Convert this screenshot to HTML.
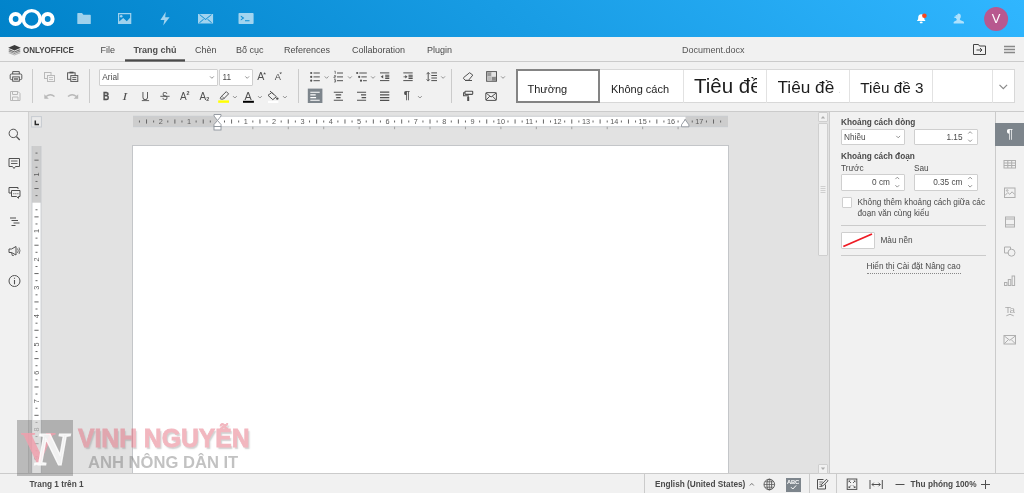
<!DOCTYPE html>
<html lang="vi">
<head>
<meta charset="utf-8">
<title>Document.docx - ONLYOFFICE</title>
<style>
*{box-sizing:border-box;margin:0;padding:0}
html,body{width:1024px;height:493px;overflow:hidden;background:#e2e2e2;font-family:"Liberation Sans",sans-serif;font-size:8.25px;color:#4a4a4a}
div,svg{position:absolute}
.bg{left:0;top:0}
#hdr{left:0;top:0;width:1024px;height:37px;background:linear-gradient(40deg,#0082c9 0%,#30b6ff 100%)}
#tabs{left:0;top:37px;width:1024px;height:24px;background:#f1f1f1}
#tbar{left:0;top:61px;width:1024px;height:51px;background:#f1f1f1;border-top:1px solid #cbcbcb;border-bottom:1px solid #cbcbcb}
#left{left:0;top:112px;width:29px;height:362px;background:#f1f1f1;border-right:1px solid #d0d0d0}
#rpanel{left:829px;top:112px;width:166px;height:362px;background:#f1f1f1;border-left:1px solid #cbcbcb}
#ricons{left:995px;top:112px;width:29px;height:362px;background:#f1f1f1;border-left:1px solid #cbcbcb}
#status{left:0;top:473px;width:1024px;height:20px;background:#f1f1f1;border-top:1px solid #cbcbcb}
.L{left:0;top:0;width:1024px;height:493px;will-change:transform}
.t{white-space:nowrap;line-height:14px}
.b{font-weight:bold}
.tb{font-size:9px}
.g{color:#1c1c1c;line-height:14px}
svg{overflow:visible}
svg text{font-family:"Liberation Sans",sans-serif}
</style>
</head>
<body>
<div id="hdr"></div><div id="tabs"></div><div id="tbar"></div><div id="left"></div><div id="rpanel"></div><div id="ricons"></div><div id="status"></div>
<div class="L"><div style="left:132px;top:145px;width:597px;height:328px;background:#fff;border:1px solid #c4c6c9;border-bottom:0"></div>
<div style="left:818px;top:112px;width:10px;height:10px;background:#f1f1f1;border:1px solid #cfcfcf;border-radius:1px"></div>
<div style="left:818px;top:123px;width:10px;height:133px;background:#f1f1f1;border:1px solid #cfcfcf;border-radius:1px"></div>
<div style="left:818px;top:464px;width:10px;height:10px;background:#f1f1f1;border:1px solid #cfcfcf;border-radius:1px"></div>
<svg class="bg" width="1024" height="493" viewBox="0 0 1024 493">
<path d="M820.800 118.500 l2.200-2.500 2.200 2.500z M820.800 467.500 l2.200 2.500 2.200-2.500z" fill="#adadad"/>
<path d="M820.500 186.500 h5 M820.500 188.500 h5 M820.500 190.500 h5 M820.500 192.500 h5" stroke="#cfcfcf" stroke-width="1"/>
<rect x="31.600" y="116.600" width="9.800" height="10.400" fill="#eaeaea" stroke="#c6cad0" stroke-width="1"/>
<path d="M35.300 120.600 v4 h3.700" fill="none" stroke="#2a2a2a" stroke-width="1.500"/>
<rect x="133" y="116.3" width="595" height="10.4" fill="#fff"/>
<rect x="133" y="116.3" width="84" height="10.4" fill="#cdcdcd"/>
<rect x="685.500" y="116.3" width="42.500" height="10.4" fill="#cdcdcd"/>
<path d="M133 116.3 h595 M133 126.7 h595" stroke="#c3c6cb" stroke-width=".8"/>
<path d="M146.53 119.400 v4.200 M174.88 119.400 v4.200 M203.22 119.400 v4.200 M231.58 119.400 v4.200 M259.93 119.400 v4.200 M288.27 119.400 v4.200 M316.62 119.400 v4.200 M344.98 119.400 v4.200 M373.33 119.400 v4.200 M401.68 119.400 v4.200 M430.02 119.400 v4.200 M458.38 119.400 v4.200 M486.73 119.400 v4.200 M515.08 119.400 v4.200 M543.43 119.400 v4.200 M571.77 119.400 v4.200 M600.12 119.400 v4.200 M628.48 119.400 v4.200 M656.83 119.400 v4.200 M685.18 119.400 v4.200 M713.52 119.400 v4.200" stroke="#666" stroke-width="1"/>
<path d="M139.44 120.500 v2 M153.61 120.500 v2 M167.79 120.500 v2 M181.96 120.500 v2 M196.14 120.500 v2 M210.31 120.500 v2 M224.49 120.500 v2 M238.66 120.500 v2 M252.84 120.500 v2 M267.01 120.500 v2 M281.19 120.500 v2 M295.36 120.500 v2 M309.54 120.500 v2 M323.71 120.500 v2 M337.89 120.500 v2 M352.06 120.500 v2 M366.24 120.500 v2 M380.41 120.500 v2 M394.59 120.500 v2 M408.76 120.500 v2 M422.94 120.500 v2 M437.11 120.500 v2 M451.29 120.500 v2 M465.46 120.500 v2 M479.64 120.500 v2 M493.81 120.500 v2 M507.99 120.500 v2 M522.16 120.500 v2 M536.34 120.500 v2 M550.51 120.500 v2 M564.69 120.500 v2 M578.86 120.500 v2 M593.04 120.500 v2 M607.21 120.500 v2 M621.39 120.500 v2 M635.56 120.500 v2 M649.74 120.500 v2 M663.91 120.500 v2 M678.09 120.500 v2 M692.26 120.500 v2 M706.44 120.500 v2 M720.61 120.500 v2" stroke="#666" stroke-width="1"/>
<text x="160.70" y="124.300" text-anchor="middle" font-size="7.300" fill="#5c5c5c">2</text>
<text x="189.05" y="124.300" text-anchor="middle" font-size="7.300" fill="#5c5c5c">1</text>
<text x="245.75" y="124.300" text-anchor="middle" font-size="7.300" fill="#5c5c5c">1</text>
<text x="274.10" y="124.300" text-anchor="middle" font-size="7.300" fill="#5c5c5c">2</text>
<text x="302.45" y="124.300" text-anchor="middle" font-size="7.300" fill="#5c5c5c">3</text>
<text x="330.80" y="124.300" text-anchor="middle" font-size="7.300" fill="#5c5c5c">4</text>
<text x="359.15" y="124.300" text-anchor="middle" font-size="7.300" fill="#5c5c5c">5</text>
<text x="387.50" y="124.300" text-anchor="middle" font-size="7.300" fill="#5c5c5c">6</text>
<text x="415.85" y="124.300" text-anchor="middle" font-size="7.300" fill="#5c5c5c">7</text>
<text x="444.20" y="124.300" text-anchor="middle" font-size="7.300" fill="#5c5c5c">8</text>
<text x="472.55" y="124.300" text-anchor="middle" font-size="7.300" fill="#5c5c5c">9</text>
<text x="500.90" y="124.300" text-anchor="middle" font-size="7.300" fill="#5c5c5c">10</text>
<text x="529.25" y="124.300" text-anchor="middle" font-size="7.300" fill="#5c5c5c">11</text>
<text x="557.60" y="124.300" text-anchor="middle" font-size="7.300" fill="#5c5c5c">12</text>
<text x="585.95" y="124.300" text-anchor="middle" font-size="7.300" fill="#5c5c5c">13</text>
<text x="614.30" y="124.300" text-anchor="middle" font-size="7.300" fill="#5c5c5c">14</text>
<text x="642.65" y="124.300" text-anchor="middle" font-size="7.300" fill="#5c5c5c">15</text>
<text x="671.00" y="124.300" text-anchor="middle" font-size="7.300" fill="#5c5c5c">16</text>
<text x="699.35" y="124.300" text-anchor="middle" font-size="7.300" fill="#5c5c5c">17</text>
<path d="M252.84 126.700 v2.500 M288.27 126.700 v2.500 M323.71 126.700 v2.500 M359.15 126.700 v2.500 M394.59 126.700 v2.500 M430.02 126.700 v2.500 M465.46 126.700 v2.500 M500.90 126.700 v2.500 M536.34 126.700 v2.500 M571.77 126.700 v2.500 M607.21 126.700 v2.500 M642.65 126.700 v2.500 M678.09 126.700 v2.500" stroke="#999" stroke-width=".9"/>
<g fill="#fff" stroke="#8d939b" stroke-width=".9"><path d="M214 114.500 h7 v1.500 l-3.500 4.500 -3.500-4.500z"/><path d="M214 126.500 v-2 l3.500-4 3.500 4 v2z"/><rect x="214" y="126.500" width="7" height="3.500"/><path d="M681.500 126.800 v-2 l3.700-5.300 3.700 5.300 v2z"/></g>
<rect x="32" y="146" width="9" height="327" fill="#fff"/>
<rect x="32" y="146" width="9" height="56.700" fill="#cdcdcd"/>
<path d="M32 146 v327 M41 146 v327" stroke="#c3c6cb" stroke-width=".8"/>
<path d="M34.400 160.17 h4.200 M34.400 188.52 h4.200 M34.400 216.88 h4.200 M34.400 245.22 h4.200 M34.400 273.57 h4.200 M34.400 301.93 h4.200 M34.400 330.27 h4.200 M34.400 358.62 h4.200 M34.400 386.98 h4.200 M34.400 415.32 h4.200 M34.400 443.68 h4.200" stroke="#666" stroke-width="1"/>
<path d="M35.500 153.09 h2 M35.500 167.26 h2 M35.500 181.44 h2 M35.500 195.61 h2 M35.500 209.79 h2 M35.500 223.96 h2 M35.500 238.14 h2 M35.500 252.31 h2 M35.500 266.49 h2 M35.500 280.66 h2 M35.500 294.84 h2 M35.500 309.01 h2 M35.500 323.19 h2 M35.500 337.36 h2 M35.500 351.54 h2 M35.500 365.71 h2 M35.500 379.89 h2 M35.500 394.06 h2 M35.500 408.24 h2 M35.500 422.41 h2 M35.500 436.59 h2 M35.500 450.76 h2 M35.500 464.94 h2" stroke="#666" stroke-width="1"/>
<text transform="translate(39.300 174.35) rotate(-90)" text-anchor="middle" font-size="7.300" fill="#5c5c5c">1</text>
<text transform="translate(39.300 231.05) rotate(-90)" text-anchor="middle" font-size="7.300" fill="#5c5c5c">1</text>
<text transform="translate(39.300 259.40) rotate(-90)" text-anchor="middle" font-size="7.300" fill="#5c5c5c">2</text>
<text transform="translate(39.300 287.75) rotate(-90)" text-anchor="middle" font-size="7.300" fill="#5c5c5c">3</text>
<text transform="translate(39.300 316.10) rotate(-90)" text-anchor="middle" font-size="7.300" fill="#5c5c5c">4</text>
<text transform="translate(39.300 344.45) rotate(-90)" text-anchor="middle" font-size="7.300" fill="#5c5c5c">5</text>
<text transform="translate(39.300 372.80) rotate(-90)" text-anchor="middle" font-size="7.300" fill="#5c5c5c">6</text>
<text transform="translate(39.300 401.15) rotate(-90)" text-anchor="middle" font-size="7.300" fill="#5c5c5c">7</text>
<text transform="translate(39.300 429.50) rotate(-90)" text-anchor="middle" font-size="7.300" fill="#5c5c5c">8</text>
<text transform="translate(39.300 457.85) rotate(-90)" text-anchor="middle" font-size="7.300" fill="#5c5c5c">9</text>
</svg>
</div>
<div class="L"><svg style="left:0;top:0" width="1024" height="37" viewBox="0 0 1024 37">
<g fill="none" stroke="#fff">
<circle cx="15.6" cy="19" r="4.9" stroke-width="4"/>
<circle cx="47.7" cy="19" r="4.9" stroke-width="4"/>
<circle cx="31.7" cy="19" r="8.4" stroke-width="3.4"/>
</g>
<g fill="#fff" opacity=".62">
<path d="M77.300 13.600 q0-.7 .7-.7 h4 l1.400 1.800 h6.700 q.7 0 .7 .7 v8 q0 .7-.7 .7 h-12.100 q-.7 0-.7-.7z"/>
<path fill-rule="evenodd" d="M118 13 h13.300 v11 h-13.300z M119.200 14.200 v7.300 l4-3.500 3.600 3.200 3.300-3.400 v-3.600z"/>
<circle cx="121.200" cy="16.300" r="1.300"/>
<path d="M165.800 11.800 l-5.400 8.200 h4 l-1.200 5.600 6.400-8.400 h-4.400z"/>
<path fill-rule="evenodd" d="M198 14 h15.100 v9.400 h-15.100z M199.300 14.800 l6.250 5.200 6.250-5.200 -.6-.5 -5.650 4.700 -5.650-4.700z M199.200 22.600 l.6 .5 4-3.600 -.6-.5z M211.900 22.600 l-.6 .5 -4-3.600 .6-.5z"/>
<path fill-rule="evenodd" d="M238.500 13.800 q0-.8 .8-.8 h13.500 q.8 0 .8 .8 v9.400 q0 .8-.8 .8 h-13.500 q-.8 0-.8-.8z M240.800 15.600 l3.600 2.500 -3.600 2.500 v-1.300 l1.900-1.200 -1.900-1.200z M245 20.200 h4.500 v1.100 h-4.500z"/>
<path d="M958.2 13.6 a2.6 2.6 0 0 1 2.6 2.7 c0 1.3-.5 2.3-1 2.8 0 .7 .3 1 1.400 1.500 1.400 .5 2.800 1 2.800 2 v1 h-10.400 v-1 c0-1 1.200-1.500 2.300-1.900 .6-.300 .9-.600 .9-1.300 -.4-.3-.7-.8-.9-1.400 h-1.500 v-1.600 h1.300 v-1.300 h1.200 v1.300 h.2 a2.600 2.600 0 0 1 1.100-2.800z"/>
</g>
<path fill="#fff" d="M921.200 14.200 c2.100 0 3 1.500 3 3.200 0 1.600 .3 2.500 1.100 3.100 v.5 h-8.200 v-.5 c.8-.6 1.100-1.500 1.100-3.100 0-1.700 .9-3.200 3-3.200z"/><ellipse cx="921.200" cy="22.400" rx="1.500" ry=".9" fill="#fff"/>
<circle cx="924.4" cy="15.700" r="2.300" fill="#f9461c"/>
<circle cx="996.1" cy="18.900" r="12" fill="#b8588f"/>
<text x="996.1" y="23.300" text-anchor="middle" font-family="Liberation Sans, sans-serif" font-size="13" fill="#fff">V</text>
</svg>
</div>
<div class="L" style="top:37px"><svg style="left:7.800px;top:7.600px" width="13" height="10.500" viewBox="0 0 13 10.500">
<path d="M6.500 0 L12.800 2.800 6.500 5.600 .2 2.800z" fill="#3c3c3c"/>
<path d="M1.700 4.300 L.2 4.950 6.500 7.500 12.800 4.950 11.300 4.300 6.500 6.400z" fill="#6a6a6a"/>
<path d="M1.700 5.800 L.2 6.450 6.500 9 12.800 6.450 11.300 5.800 6.500 7.900z" fill="#8e8e8e"/>
<path d="M1.700 7.300 L.2 7.950 6.500 10.500 12.800 7.950 11.300 7.300 6.500 9.400z" fill="#b6b6b6"/>
</svg>
<div class="t b" style="left:23px;top:5.800px;font-size:9.600px;color:#444;transform-origin:0 50%;transform:scaleX(.835)">ONLYOFFICE</div>
<div class="t tb" style="top:5.500px;left:100.500px">File</div>
<div class="t" style="left:133.500px;top:5.500px;font-size:9px;font-weight:bold;color:#505050">Trang chủ</div>
<svg style="left:125px;top:22px" width="60" height="3" viewBox="0 0 60 3"><rect x="0" y=".3" width="60" height="2.300" fill="#4a4a4a"/></svg>
<div class="t tb" style="top:5.500px;left:195px">Chèn</div>
<div class="t tb" style="top:5.500px;left:236px">Bố cục</div>
<div class="t tb" style="top:5.500px;left:284px">References</div>
<div class="t tb" style="top:5.500px;left:352px">Collaboration</div>
<div class="t tb" style="top:5.500px;left:427px">Plugin</div>
<div class="t" style="left:682px;top:5.500px;font-size:9px;color:#555">Document.docx</div>
<svg style="left:973px;top:7px" width="13" height="11" viewBox="0 0 13 11" fill="none" stroke="#444" stroke-width="1">
<path d="M.5 .5 h5 l1 1.500 h6 v8.500 h-12z"/>
<path d="M3.500 6 h5.500 M7 4 l2 2-2 2"/>
</svg>
<svg style="left:1004px;top:9px" width="11" height="8" viewBox="0 0 11 8" stroke="#888" stroke-width="1.300">
<path d="M0 .5 h11 M0 3.500 h11 M0 6.500 h11"/>
</svg>
</div>
<div class="L"><div style="left:32px;top:69px;width:1px;height:34px;background:#cbcbcb"></div>
<div style="left:89px;top:69px;width:1px;height:34px;background:#cbcbcb"></div>
<div style="left:298px;top:69px;width:1px;height:34px;background:#cbcbcb"></div>
<div style="left:451px;top:69px;width:1px;height:34px;background:#cbcbcb"></div>
<div style="left:99px;top:69px;width:118.500px;height:16.500px;background:#fff;border:1px solid #cfcfcf;border-radius:1px"></div>
<div style="left:219px;top:69px;width:33.500px;height:16.500px;background:#fff;border:1px solid #cfcfcf;border-radius:1px"></div>
<div class="t" style="left:102.300px;top:71.200px">Arial</div>
<div class="t" style="left:222.500px;top:71.200px">11</div>
<svg class="bg" width="1024" height="493" viewBox="0 0 1024 493">
<!-- print -->
<g fill="none" stroke="#505050" stroke-width=".95">
<path d="M12.700 74 v-2.400 h6.600 v2.400"/>
<rect x="10.200" y="74" width="11.600" height="5.600" rx="1.200"/>
<rect x="12.700" y="76.900" width="6.600" height="4.300" fill="#f1f1f1"/>
<path d="M14 79 h4" stroke-width="1.300"/>
</g>
<!-- save (disabled) -->
<g fill="none" stroke="#505050" stroke-width="1" opacity=".35">
<path d="M10.500 91.500 h7.500 l2 2 v7 h-9.500z"/>
<path d="M12.500 91.500 v3 h5 v-3 M12.500 100.500 v-3.500 h5.500 v3.500"/>
</g>
<!-- copy (disabled) -->
<g fill="#f1f1f1" stroke="#505050" stroke-width="1" opacity=".35">
<rect x="44.500" y="72.500" width="6.500" height="6"/>
<rect x="47.500" y="75.500" width="7" height="6"/>
<path d="M49 77.500 h4 M49 79.500 h4" stroke-width=".8"/>
</g>
<!-- paste -->
<g fill="#f1f1f1" stroke="#505050" stroke-width=".95">
<rect x="67.600" y="72.800" width="7.500" height="6.500"/>
<path d="M69.500 72.500 h4" stroke-width="1.600"/>
<rect x="70.800" y="75.600" width="7" height="5.800"/>
<path d="M72.300 77.600 h4 M72.300 79.500 h4" stroke-width=".9"/>
</g>
<!-- undo / redo disabled -->
<g opacity=".35" fill="none" stroke="#505050" stroke-width="1.400">
<path d="M46 96.500 q4.500-3.500 8.500 0"/>
<path d="M44.300 94.300 v4.500 h4.500z" fill="#505050" stroke="none"/>
<path d="M76.500 96.500 q-4.500-3.500-8.500 0"/>
<path d="M78.200 94.300 v4.500 h-4.500z" fill="#505050" stroke="none"/>
</g>
<!-- combo arrows -->
<g fill="none" stroke="#888" stroke-width=".9">
<path d="M210 76.400 l1.900 1.900 1.900-1.900"/>
<path d="M245.300 76.400 l1.900 1.900 1.900-1.900"/>
<path d="M233 96.100 l1.900 1.900 1.900-1.900"/>
<path d="M258 96.100 l1.900 1.900 1.900-1.900"/>
<path d="M283 96.100 l1.900 1.900 1.900-1.900"/>
<path d="M324.700 76.400 l1.900 1.900 1.900-1.900"/>
<path d="M348 76.400 l1.900 1.900 1.900-1.900"/>
<path d="M371.100 76.400 l1.900 1.900 1.900-1.900"/>
<path d="M441.200 76.400 l1.900 1.900 1.900-1.900"/>
<path d="M501.100 76.400 l1.900 1.900 1.900-1.900"/>
<path d="M418 96.100 l1.900 1.900 1.900-1.900"/>
</g>
<!-- B I U S -->
<text transform="translate(103.100 99.700) scale(.84 1)" font-size="10.300" font-weight="bold" fill="#505050" stroke="#505050" stroke-width=".3">B</text>
<text transform="translate(122.600 99.700) scale(1.250 1)" font-size="11.300" font-style="italic" style="font-family:'Liberation Serif',serif" fill="#505050">I</text>
<text transform="translate(141.700 99.500) scale(.95 1)" font-size="10.200" fill="#505050">U</text>
<path d="M141.800 100.600 h7.300" stroke="#505050" stroke-width=".9"/>
<text transform="translate(162.100 99.700) scale(.85 1)" font-size="10.300" fill="#505050">S</text>
<path d="M160.300 96.300 h9.300" stroke="#505050" stroke-width=".9"/>
<text x="180" y="99.600" font-size="10" fill="#505050">A</text>
<text x="186.600" y="95.300" font-size="5.400" font-weight="bold" fill="#505050">2</text>
<text x="199.500" y="99.600" font-size="10" fill="#505050">A</text>
<text x="206.200" y="100.800" font-size="5.400" font-weight="bold" fill="#505050">2</text>
<!-- highlight -->
<g fill="none" stroke="#505050" stroke-width="1">
<path d="M226.300 91.600 l2.300 2.300 -5.200 5.200 h-2.600 l-.6-.6 .8-1.700z"/>
<path d="M222 96.300 l2.300 2.300" stroke-width=".7"/>
</g>
<rect x="218.200" y="100.400" width="10.800" height="2.400" fill="#ffff00"/>
<!-- font color -->
<text x="244.600" y="99.900" font-size="10.800" fill="#505050">A</text>
<rect x="243" y="100.800" width="10.900" height="2" fill="#000"/>
<!-- bucket -->
<g fill="none" stroke="#505050" stroke-width="1">
<path d="M271.800 92.500 l4.600 4.200 -3.600 3 -4.800-4.400z"/>
<path d="M270 91 l3.600 3.400"/>
<circle cx="277.300" cy="98.600" r="1.200" fill="#505050" stroke="none"/>
</g>
<rect x="268" y="100.800" width="10.400" height="2.200" fill="#fff"/>
<!-- A up / A down -->
<text x="257.300" y="80.300" font-size="10.600" fill="#505050">A</text>
<path d="M263.200 74.200 l1.400-2 1.400 2z" fill="#505050"/>
<text x="274.800" y="80.300" font-size="9.200" fill="#484848">A</text>
<path d="M279.400 72.400 l1.300 1.900 1.300-1.900z" fill="#505050"/>
<!-- bullets -->
<g stroke="#505050" stroke-width="1" fill="#505050">
<path d="M313.500 73 h6.300 M313.500 76.900 h6.300 M313.500 80.700 h6.300"/>
<circle cx="311.200" cy="73" r="1.100" stroke="none"/><circle cx="311.200" cy="76.900" r="1.100" stroke="none"/><circle cx="311.200" cy="80.700" r="1.100" stroke="none"/>
</g>
<!-- numbered -->
<g stroke="#505050" stroke-width="1" fill="#505050">
<path d="M337 73 h6 M337 76.900 h6 M337 80.700 h6"/>
<path d="M334.300 71.200 h1 v2.600 M334 75.600 h1.600 v1.200 h-1.600 v1.200 h1.600 M334 79.600 h1.600 v2.400 h-1.600 M334.600 80.800 h1" fill="none" stroke-width=".7"/>
</g>
<!-- multilevel -->
<g stroke="#505050" stroke-width="1" fill="#505050">
<path d="M359.300 73 h7.500 M361.300 76.900 h5.500 M363 80.700 h3.800"/>
<circle cx="357.200" cy="73" r="1.100" stroke="none"/><circle cx="359.200" cy="76.900" r="1.100" stroke="none"/><circle cx="361" cy="80.700" r="1.100" stroke="none"/>
</g>
<!-- dec indent -->
<g stroke="#505050" stroke-width="1" fill="none">
<path d="M380 72.900 h9.300 M380 80.600 h9.300"/><path d="M385.200 75.200 h4.100 M385.200 76.800 h4.100 M385.200 78.400 h4.100" stroke-width="1.100"/>
<path d="M383.200 75 l-2.500 1.800 2.500 1.800z" fill="#505050" stroke="none"/>
</g>
<!-- inc indent -->
<g stroke="#505050" stroke-width="1" fill="none">
<path d="M403.300 72.900 h9.400 M403.300 80.600 h9.400"/><path d="M408.500 75.200 h4.200 M408.500 76.800 h4.200 M408.500 78.400 h4.200" stroke-width="1.100"/>
<path d="M403.500 76.800 h2.500" stroke-width=".8"/>
<path d="M405.300 75 l2.200 1.800 -2.200 1.800z" fill="#505050" stroke="none"/>
</g>
<!-- line spacing -->
<g stroke="#505050" stroke-width="1" fill="none">
<path d="M431.300 72.900 h5.700 M431.300 75.500 h5.700 M431.300 78 h5.700 M431.300 80.600 h5.700"/>
<path d="M428.200 72.600 v8.200" stroke-width="1"/>
<path d="M426.600 74.200 l1.600-1.800 1.600 1.800 M426.600 79.300 l1.600 1.800 1.600-1.800" stroke-width=".9"/>
</g>
<!-- eraser -->
<g stroke="#505050" stroke-width="1" fill="none">
<path d="M469.600 72.700 l3.200 2.400 -4.300 5.200 h-3 l-1.800-1.500 q-.6-.6 0-1.300z"/>
<path d="M465 80.500 h7"/>
</g>
<!-- shading -->
<rect x="486.700" y="71.700" width="9.700" height="9.500" fill="#fff" stroke="#505050" stroke-width="1.100"/>
<rect x="487.300" y="72.300" width="4.300" height="4.200" fill="#999"/>
<rect x="491.600" y="76.500" width="4.300" height="4.200" fill="#888"/>
<rect x="487.300" y="76.500" width="4.300" height="4.200" fill="#bbb"/>
<rect x="491.600" y="72.300" width="4.300" height="4.200" fill="#e4e4e4"/>
<!-- align left active -->
<rect x="307.800" y="88.600" width="14.600" height="14.400" fill="#7d858c"/>
<g stroke="#fff" stroke-width="1.100" fill="none">
<path d="M310.300 92.200 h9.400 M310.300 94.900 h5.400 M310.300 97.600 h5.800 M310.300 100.300 h9.400"/>
</g>
<g stroke="#505050" stroke-width="1.100" fill="none">
<path d="M333.800 92.200 h9.200 M333.800 100.300 h9.200"/><path d="M335.600 94.900 h5.600 M336.200 97.600 h4.400" stroke-width="1.400"/>
<path d="M357 92.200 h9.100 M357 100.300 h9.100"/><path d="M361 94.900 h5.100 M361.600 97.600 h4.500" stroke-width="1.400"/>
<path d="M380 92.200 h9.300 M380 94.900 h9.300 M380 97.600 h9.300 M380 100.300 h9.300" stroke-width="1.250"/>
</g>
<!-- pilcrow -->
<text x="403.800" y="98.800" font-size="11.500" fill="#505050" stroke="#505050" stroke-width=".25">¶</text>
<!-- paint roller -->
<g stroke="#505050" stroke-width="1.100" fill="none">
<rect x="465" y="91.200" width="7.700" height="3.200" rx=".6"/>
<path d="M465 92.800 h-1.400 v3 h4.600 v1.500"/>
<path d="M468.200 97 v4" stroke-width="2"/>
</g>
<!-- mail merge -->
<g stroke="#505050" stroke-width="1" fill="none">
<rect x="485.800" y="92.600" width="10.600" height="7.800" rx=".6"/>
<path d="M486 93 l5.100 4 5.100-4 M486 100 l3.800-3.800 M496.200 100 l-3.800-3.800"/>
</g>
</svg>
<div style="left:516px;top:69px;width:499px;height:34px;background:#fff;border:1px solid #d8d8d8"></div>
<div style="left:683px;top:70px;width:1px;height:32.500px;background:#e2e2e2"></div>
<div style="left:766px;top:70px;width:1px;height:32.500px;background:#e2e2e2"></div>
<div style="left:849px;top:70px;width:1px;height:32.500px;background:#e2e2e2"></div>
<div style="left:932px;top:70px;width:1px;height:32.500px;background:#e2e2e2"></div>
<div style="left:992px;top:70px;width:1px;height:32.500px;background:#e2e2e2"></div>
<div style="left:516px;top:69px;width:84px;height:34px;border:2px solid #848484"></div>
<div class="t g" style="left:527.500px;top:82px;font-size:11px">Thường</div>
<div class="t g" style="left:611px;top:82px;font-size:11px">Không cách</div>
<div class="t g" style="left:694px;top:72.500px;font-size:20.500px;line-height:26px;width:63px;overflow:hidden">Tiêu đề 1</div>
<div class="t g" style="left:777.500px;top:75.500px;font-size:17.200px;line-height:22px;width:62.500px;overflow:hidden">Tiêu đề 2</div>
<div class="t g" style="left:860.300px;top:78.700px;font-size:15.300px;line-height:18px">Tiêu đề 3</div>
<svg class="bg" width="1024" height="493" viewBox="0 0 1024 493">
<path d="M999.500 84.800 l3.800 3.800 3.800-3.800" fill="none" stroke="#8a8a8a" stroke-width="1.200"/>
</svg>
</div>
<div class="L"><svg class="bg" width="1024" height="493" viewBox="0 0 1024 493">
<g fill="none" stroke="#505050" stroke-width="1">
<circle cx="13.300" cy="133.400" r="4.200"/>
<path d="M16.400 136.500 l3.300 3.500" stroke-width="1.200"/>
<path d="M9 158.500 h10.500 v8 h-4 l-1.500 2 -1.500-2 h-3.500z"/>
<path d="M11 161 h6.500 M11 163.500 h6.500" stroke-width=".9"/>
<path d="M11 193 h-2 v-5.500 h9 v1.500"/>
<path d="M11.500 190.500 h8.500 v6 h-1.500 v1.800 l-2-1.800 h-5z"/>
<path d="M13.500 193.600 h.8 M15.500 193.600 h.8 M17.500 193.600 h.8" stroke-width="1.100"/>
<path d="M10 218 h6 M11.500 220.500 h6.500 M13.500 223 h6 M11.500 225.500 h4"/>
<path d="M9 249 h2.500 l4.500-2.500 v8.500 l-4.500-2.500 h-2.500z"/>
<path d="M11.500 252.500 l.8 3 h1.500" stroke-width=".9"/>
<path d="M17.500 248.500 q1.500 2.200 0 4.500 M19 247.500 q2 3.200 0 6.500" stroke-width=".8"/>
<circle cx="14.500" cy="281" r="5.500"/>
<path d="M14.500 280 v4.200 M14.500 277.800 v1" stroke-width="1.100"/>
</g>
</svg>
</div>
<div class="L"><div class="t b" style="left:841px;top:116.1px">Khoảng cách dòng</div>
<div style="left:841px;top:128.500px;width:64px;height:16.500px;background:#fff;border:1px solid #cfcfcf;border-radius:1px"></div>
<div class="t" style="left:844px;top:130.5px">Nhiều</div>
<div style="left:913.500px;top:128.500px;width:64.500px;height:16.500px;background:#fff;border:1px solid #cfcfcf;border-radius:1px"></div>
<div class="t" style="left:913.500px;top:130.5px;width:49px;text-align:right">1.15</div>
<div class="t b" style="left:841px;top:150.1px">Khoảng cách đoạn</div>
<div class="t" style="left:841px;top:162px">Trước</div>
<div class="t" style="left:914px;top:162px">Sau</div>
<div style="left:841px;top:174px;width:64px;height:16.500px;background:#fff;border:1px solid #cfcfcf;border-radius:1px"></div>
<div class="t" style="left:841px;top:175.8px;width:49px;text-align:right">0 cm</div>
<div style="left:913.500px;top:174px;width:64.500px;height:16.500px;background:#fff;border:1px solid #cfcfcf;border-radius:1px"></div>
<div class="t" style="left:913.500px;top:175.8px;width:49px;text-align:right">0.35 cm</div>
<div style="left:841.500px;top:197px;width:10.500px;height:10.500px;background:#fff;border:1px solid #cfcfcf;border-radius:1px"></div>
<div class="t" style="left:857.500px;top:196.7px;line-height:11.250px;white-space:normal;width:135px">Không thêm khoảng cách giữa các đoạn văn cùng kiểu</div>
<div style="left:841px;top:225px;width:145px;height:1px;background:#cbcbcb"></div>
<div style="left:841px;top:231.500px;width:33.500px;height:17.500px;background:#fff;border:1px solid #cfcfcf;border-radius:1px"></div>
<div class="t" style="left:880.500px;top:234.200px">Màu nền</div>
<div style="left:841px;top:255px;width:145px;height:1px;background:#cbcbcb"></div>
<div class="t" style="left:866.500px;top:261.200px;border-bottom:1px dotted #888;line-height:12px">Hiển thị Cài đặt Nâng cao</div>
<svg class="bg" width="1024" height="493" viewBox="0 0 1024 493">
<path d="M843.300 246.500 L872 234" stroke="#ee1c25" stroke-width="1.900"/>
<g fill="none" stroke="#888" stroke-width=".9">
<path d="M896.300 135.900 l1.900 1.900 1.900-1.900"/>
<path d="M968.200 133.600 l1.900-1.900 1.900 1.900 M968.200 139.700 l1.900 1.900 1.900-1.900"/>
<path d="M895.400 179.100 l1.900-1.900 1.900 1.900 M895.400 185.200 l1.900 1.900 1.900-1.900"/>
<path d="M968.200 179.100 l1.900-1.900 1.900 1.900 M968.200 185.200 l1.900 1.900 1.900-1.900"/>
</g>
</svg>
</div>
<div class="L"><div style="left:995px;top:123px;width:29px;height:23px;background:#7d858c"></div>
<svg class="bg" width="1024" height="493" viewBox="0 0 1024 493">
<text x="1009.700" y="138" text-anchor="middle" font-size="12" fill="#fff">¶</text>
<g fill="none" stroke="#444" stroke-width="1" opacity=".38">
<rect x="1004" y="160.500" width="11.500" height="7.500"/>
<path d="M1004 163 h11.500 M1004 165.500 h11.500 M1007.800 160.500 v7.500 M1011.700 160.500 v7.500"/>
<rect x="1004.500" y="188" width="10.500" height="9.500"/>
<path d="M1005 195.500 l2.800-3 2 1.800 2.300-2.500 2.500 2.600"/>
<circle cx="1007.200" cy="190.500" r=".8"/>
<rect x="1005.500" y="217" width="9" height="10"/>
<path d="M1006 219 h8 M1006 224.800 h8" stroke-width="1"/>
<path d="M1009 253 h-4.500 v-6 h6 v2"/>
<circle cx="1011.500" cy="252.700" r="3.500"/>
<rect x="1004.500" y="282.500" width="2.500" height="3"/>
<rect x="1008.300" y="279.500" width="2.500" height="6"/>
<rect x="1012.100" y="276" width="2.500" height="9.500"/>
<path d="M1006.300 315.800 q3.700-3 7.400 0"/>
<rect x="1004" y="335.500" width="11.500" height="8.500"/>
<path d="M1004.300 336 l5.500 4.300 5.500-4.300 M1004.300 343.700 l4-4 M1015.300 343.700 l-4-4"/>
</g>
<text x="1005" y="312.500" font-size="9.800" fill="#444" opacity=".42" letter-spacing="-.5">Ta</text>
</svg>
</div>
<div class="L"><div class="t b" style="left:29.500px;top:478px">Trang 1 trên 1</div>
<div class="t b" style="left:655px;top:478px">English (United States)</div>
<div class="t b" style="left:910.500px;top:478px">Thu phóng 100%</div>
<div style="left:644px;top:474px;width:1px;height:19px;background:#cbcbcb"></div>
<div style="left:809px;top:474px;width:1px;height:19px;background:#cbcbcb"></div>
<div style="left:836px;top:474px;width:1px;height:19px;background:#cbcbcb"></div>
<div style="left:785.500px;top:478px;width:15px;height:14px;background:#7d858c"></div>
<svg class="bg" width="1024" height="493" viewBox="0 0 1024 493">
<path d="M749.800 485.500 l2-2.100 2 2.100" fill="none" stroke="#666" stroke-width=".9"/>
<g fill="none" stroke="#505050" stroke-width=".9">
<circle cx="769.300" cy="484.500" r="5.300"/>
<ellipse cx="769.300" cy="484.500" rx="2.400" ry="5.300"/>
<path d="M764 484.500 h10.600 M769.300 479.200 v10.600 M765 481.800 h8.600 M765 487.200 h8.600" stroke-width=".7"/>
</g>
<text x="793" y="484.300" text-anchor="middle" font-size="5.800" font-weight="bold" fill="#fff" letter-spacing="-.2">ABC</text>
<path d="M791 487.200 l1.800 1.800 3.400-3.600" fill="none" stroke="#fff" stroke-width="1"/>
<!-- track changes -->
<g fill="none" stroke="#505050" stroke-width="1">
<path d="M825.500 484.500 v4.500 h-8 v-9.500 h6"/>
<path d="M819.300 482 h3.500 M819.300 484.200 h2.500 M819.300 486.500 h2" stroke-width=".8"/>
<path d="M826.500 479.300 l1.500 1.500 -5 5 -2 .6 .6-2z" fill="#f1f1f1"/>
</g>
<!-- fit page -->
<g fill="none" stroke="#505050" stroke-width="1">
<rect x="847.200" y="479" width="9.600" height="10.400"/>
<path d="M849 481 l2 2 M855 481 l-2 2 M849 487.400 l2-2 M855 487.400 l-2-2" stroke-width=".9"/>
<path d="M848.600 480.500 h2 l-2 2z M855.400 480.500 h-2 l2 2z M848.600 488 h2 l-2-2z M855.400 488 h-2 l2-2z" fill="#505050" stroke="none"/>
</g>
<!-- fit width -->
<g fill="none" stroke="#505050" stroke-width="1">
<path d="M870 480 v9 M882.300 480 v9 M872 484.500 h8.300"/>
<path d="M873.800 482.700 l-1.800 1.800 1.800 1.800 M878.500 482.700 l1.800 1.800 -1.800 1.800" stroke-width=".9"/>
</g>
<path d="M895.500 484.500 h9 M981 484.500 h9 M985.500 480 v9" stroke="#505050" stroke-width="1"/>
</svg>
</div>
<div class="L"><div style="left:17px;top:420px;width:56px;height:55.500px;background:rgba(90,90,90,.36)"></div>
<div style="left:32px;top:420px;width:9px;height:53px;background:rgba(255,255,255,.42)"></div>
<svg class="bg" width="1024" height="493" viewBox="0 0 1024 493">
<text transform="translate(20.500 461.500) scale(1.120 1.020)" font-size="44" font-weight="bold" style="font-family:'Liberation Serif',serif" fill="#f0a0ad" fill-opacity=".85">V</text>
<text transform="translate(35 465) scale(1.050 1.020)" font-size="45" font-weight="bold" font-style="italic" style="font-family:'Liberation Serif',serif" fill="#fff" fill-opacity=".82" stroke="#fff" stroke-opacity=".82" stroke-width="1.200" paint-order="stroke">N</text>
</svg>
<div class="t b" id="wm1" style="left:77.500px;top:422.500px;font-size:26px;line-height:30px;color:#e2586c;opacity:.43;text-shadow:1.500px 1.500px 1.500px rgba(120,120,120,.8);-webkit-text-stroke:.8px #e2586c;transform-origin:0 50%;transform:scaleX(.95)">VINH NGUYỄN</div>
<div class="t b" id="wm2" style="left:88px;top:453px;font-size:16.600px;line-height:20px;color:rgba(110,110,110,.42)">ANH NÔNG DÂN IT</div>
</div>
</body>
</html>
